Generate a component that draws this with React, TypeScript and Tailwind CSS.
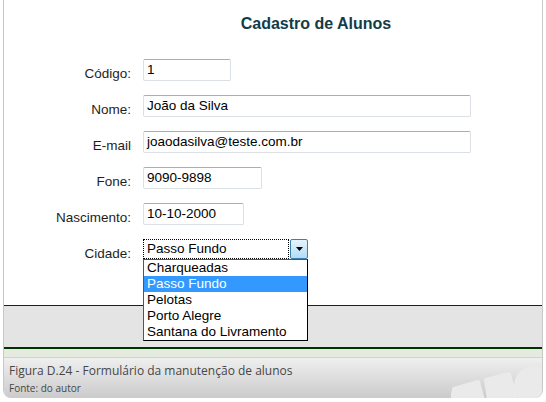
import React from "react";

const rows: { label: string; value: string; w: number }[] = [
  { label: "Código:", value: "1", w: 88 },
  { label: "Nome:", value: "João da Silva", w: 328 },
  { label: "E-mail", value: "joaodasilva@teste.com.br", w: 328 },
  { label: "Fone:", value: "9090-9898", w: 119 },
  { label: "Nascimento:", value: "10-10-2000", w: 101 },
];

const cities = ["Charqueadas", "Passo Fundo", "Pelotas", "Porto Alegre", "Santana do Livramento"];

function Field({ value, w }: { value: string; w: number }) {
  return (
    <div
      className="h-[22px] rounded-[2px] border border-[#dbdfe6] border-t-[#abadb3] bg-white pl-[3px] text-[13.5px] leading-[19px] text-black"
      style={{ width: w }}
    >
      {value}
    </div>
  );
}

export default function App() {
  return (
    <div className="relative h-[402px] w-[546px] bg-white font-['Liberation_Sans',Arial,sans-serif]">
      <div className="ml-[3px] flex h-[398px] w-[540px] flex-col overflow-hidden rounded-b-[8px] border-x border-[#c8c8c8]">
        <div className="h-[305px] bg-white pt-[15px]">
          <div className="pl-[86px] text-center text-[16px] font-bold leading-[18px] text-[#113c48]">
            Cadastro de Alunos
          </div>
          <div className="mt-[26px] flex flex-col gap-[14px]">
            {rows.map((r) => (
              <div key={r.label} className="flex h-[22px] items-start">
                <div className="w-[127px] pt-[7px] text-right text-[13.5px] leading-[16px] text-[#1e1e1e]">
                  {r.label}
                </div>
                <div className="ml-[12px]">
                  <Field value={r.value} w={r.w} />
                </div>
              </div>
            ))}
            <div className="flex h-[22px] items-start">
              <div className="w-[127px] pt-[7px] text-right text-[13.5px] leading-[16px] text-[#1e1e1e]">
                Cidade:
              </div>
              <div className="relative ml-[12px] flex h-[20px] w-[165px] items-stretch">
                <div className="flex-1 border border-dotted border-black pl-[3px] text-[13.5px] leading-[17px] text-black">
                  Passo Fundo
                </div>
                <div className="ml-[1px] flex w-[18px] items-center justify-center rounded-[2px] border border-[#3c7fb1] bg-linear-to-b from-[#e5f4fc] to-[#b1dcf6]">
                  <svg width="7" height="4" viewBox="0 0 7 4">
                    <path d="M0 0h7L3.5 4z" fill="#000" />
                  </svg>
                </div>
                <div className="absolute left-0 top-[20px] z-10 w-[165px] border border-[#555] border-r-black border-b-black bg-white">
                  {cities.map((c) => (
                    <div
                      key={c}
                      className={
                        c === "Passo Fundo"
                          ? "h-[16px] bg-[#3399ff] pl-[3px] text-[13.5px] leading-[16px] text-white"
                          : "h-[16px] pl-[3px] text-[13.5px] leading-[16px] text-black"
                      }
                    >
                      {c}
                    </div>
                  ))}
                </div>
              </div>
            </div>
          </div>
        </div>
        <div className="h-[1px] bg-[#003300]" />
        <div className="h-[41px] bg-[#e4e4e4]" />
        <div className="h-[2px] bg-[#003300]" />
        <div className="h-[8px] bg-[#e5ecdf]" />
        <div className="h-[1px] bg-[#d2d2d2]" />
        <div className="relative flex-1 bg-linear-to-b from-[#efefef] to-[#cbcbcb] pl-[5px] font-['Open_Sans',sans-serif]">
          <div className="pt-[4px] text-[12px] leading-[17px] text-[#474747]">
            Figura D.24 - Formulário da manutenção de alunos
          </div>
          <div className="mt-[2px] text-[10px] leading-[14px] text-[#474747]">Fonte: do autor</div>
          <svg className="absolute bottom-0 right-0" width="91" height="33" viewBox="0 0 91 33">
            <g fill="#eaeaea" stroke="#eaeaea" strokeWidth="4" strokeLinejoin="round">
              <path d="M3 24 L27 17 L32 35 L1 35 Z" />
              <path d="M35 15 L58 9 L65 35 L38 35 Z" />
            </g>
            <circle cx="83" cy="21" r="20" fill="#eaeaea" />
          </svg>
        </div>
      </div>
    </div>
  );
}
